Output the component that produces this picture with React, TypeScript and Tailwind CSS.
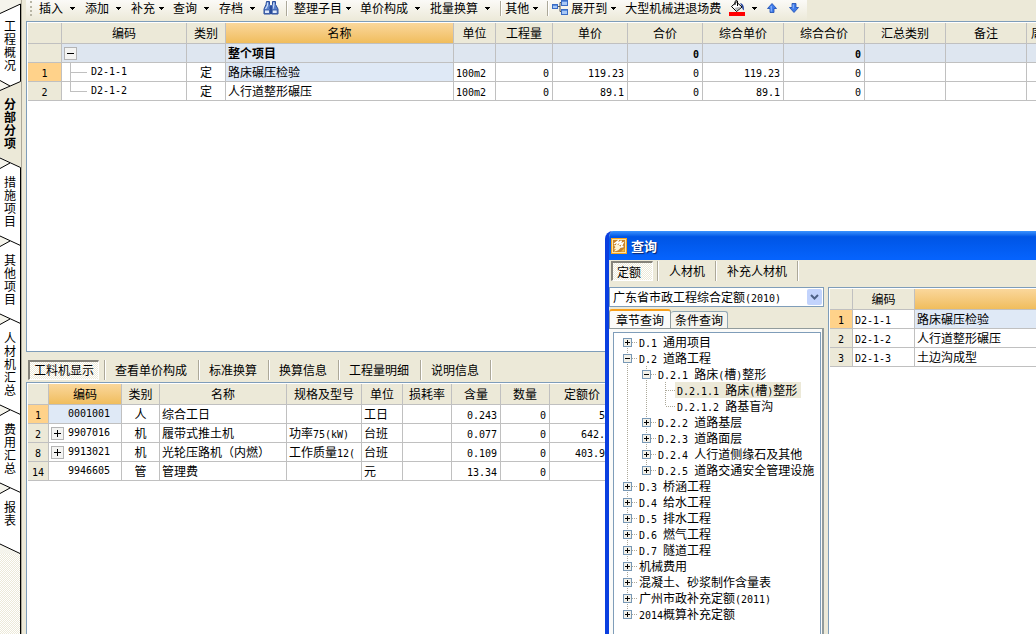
import React, { useState } from "react";

/* Latin runs are set in a monospace face that is half a CJK character wide. */
function T({ children }: { children: string }) {
  const parts = children.split(/([\x20-\x7e]+)/).filter(Boolean);
  return (
    <>
      {parts.map((p, i) =>
        /^[\x20-\x7e]+$/.test(p) ? (
          <span key={i} className="whitespace-pre font-['DejaVu_Sans_Mono',monospace] text-[10px] leading-none">
            {p}
          </span>
        ) : (
          <React.Fragment key={i}>{p}</React.Fragment>
        )
      )}
    </>
  );
}

/* ---------- left vertical tabs ---------- */

const SIDE_TABS = ["工程概况", "分部分项", "措施项目", "其他项目", "人材机汇总", "费用汇总", "报表"];
const DITHER = "bg-[repeating-conic-gradient(#ece9d8_0_25%,#fff_0_50%)] bg-size-[2px_2px]";

function Notch({ kind }: { kind: "top" | "plain" | "beforeActive" | "afterActive" | "last" }) {
  const face = "#ece9d8";
  const dither = "#f5f4ec";
  if (kind === "top")
    return (
      <svg className="block h-[19px] w-[22px] shrink-0" viewBox="0 0 22 19">
        <rect width="22" height="19" fill={face} />
        <path d="M0 0H20V4L0 14Z" fill={dither} />
        <path d="M0 13.5L20 4V19H0Z" fill="#fff" />
        <path d="M0 13.5L20.5 4V19" fill="none" stroke="#000" />
        <path d="M21.5 0V19" stroke="#aca899" />
      </svg>
    );
  if (kind === "last")
    return (
      <svg className="block h-[28px] w-[22px] shrink-0" viewBox="0 0 22 28">
        <rect width="22" height="28" fill={dither} />
        <path d="M0 0H20V27L0 18Z" fill="#fff" />
        <path d="M0 18L20 27.5" stroke="#000" />
        <path d="M20.5 0V28" stroke="#000" />
        <path d="M21.5 0V28" stroke="#aca899" />
      </svg>
    );
  const before = kind === "beforeActive";
  const after = kind === "afterActive";
  return (
    <svg className="block h-[26px] w-[22px] shrink-0" viewBox="0 0 22 26">
      <rect width="22" height="26" fill={after || before ? face : "#fff"} />
      {before && <path d="M0 0H20V10.5L0 20Z" fill="#fff" />}
      {after && <path d="M0 8L20 18V26H0Z" fill="#fff" />}
      <path d="M0 9L10 14L0 19.5Z" fill={dither} />
      {before ? (
        <path d="M0 19.5L20.5 10.5V0M0 9.5L10 15" fill="none" stroke="#000" />
      ) : (
        <path d="M0 9L20.5 18.5V26M0 19.5L10 14" fill="none" stroke="#000" />
      )}
      {kind === "plain" && <path d="M20.5 0V26" stroke="#000" />}
      <path d="M21.5 0V26" stroke="#aca899" />
    </svg>
  );
}

function SideTabs() {
  const active = 1;
  return (
    <nav className="flex w-[22px] shrink-0 flex-col">
      <Notch kind="top" />
      {SIDE_TABS.map((t, i) => (
        <React.Fragment key={t}>
          <button
            type="button"
            className={
              "block w-[22px] shrink-0 border-r border-[#aca899] pl-1 text-left " +
              (i === active ? "bg-[#ece9d8] font-bold" : "bg-white")
            }
          >
            <span
              className={
                "block border-r pr-1 leading-[13px] " + (i === active ? "border-transparent" : "border-black")
              }
            >
              <span className="block w-3 break-all">{t}</span>
            </span>
          </button>
          <Notch
            kind={
              i === SIDE_TABS.length - 1
                ? "last"
                : i + 1 === active
                  ? "beforeActive"
                  : i === active
                    ? "afterActive"
                    : "plain"
            }
          />
        </React.Fragment>
      ))}
      <div className={"flex-1 border-r border-[#aca899] " + DITHER}>
        <div className="h-full border-r border-black" />
      </div>
    </nav>
  );
}

/* ---------- toolbar ---------- */

function Caret() {
  return (
    <svg className="h-[3px] w-[5px] shrink-0" viewBox="0 0 5 3" shapeRendering="crispEdges">
      <path d="M0 0H5V1H4V2H3V3H2V2H1V1H0Z" fill="#000" />
    </svg>
  );
}

function Drop({ children, wide }: { children: string; wide?: boolean }) {
  return (
    <button
      type="button"
      className={"flex shrink-0 items-center whitespace-nowrap " + (wide ? "mr-[10px] gap-[7px]" : "mr-[9px] gap-1")}
    >
      {children}
      <Caret />
    </button>
  );
}

function Sep({ tall }: { tall?: boolean }) {
  return (
    <span
      className={"w-[2px] shrink-0 border-l border-r border-l-[#aca899] border-r-white " + (tall ? "h-5" : "h-[15px]")}
    />
  );
}

function Binoculars() {
  return (
    <svg className="h-4 w-4 shrink-0" viewBox="0 0 16 16">
      <path d="M3.5 1.5h3v3l1 1v8.5h-6.5V9l2-4.5zM9.5 1.5h3v3L15 9v5h-6.5V5.5l1-1z" fill="#5b82cc" stroke="#2a4c9a" />
      <path d="M4.5 2.5v3L2.5 9M10.8 2.5v3L9.8 9" stroke="#c9dcfa" strokeWidth="1.2" fill="none" />
      <path d="M1.5 10h5v3.5h-5zM9.2 10h5v3.5h-5z" fill="#dfe9fb" stroke="#2a4c9a" strokeWidth=".8" />
      <path d="M6.5 6.5h3v2.5h-3z" fill="#2a4c9a" />
    </svg>
  );
}

function ExpandIcon() {
  return (
    <svg className="h-4 w-4 shrink-0" viewBox="0 0 16 16">
      <path d="M5 6.5h3M10 2.5H8V11.5H10" fill="none" stroke="#555" />
      <rect x=".5" y="4.5" width="5" height="4" fill="#a9c8f5" stroke="#3a6cc4" />
      <rect x="9.5" y=".5" width="6" height="5" fill="#a9c8f5" stroke="#3a6cc4" />
      <rect x="9.5" y="9.5" width="6" height="5" fill="#a9c8f5" stroke="#3a6cc4" />
      <path d="M1 5.5h4M10 1.5h5M10 10.5h5" stroke="#5d8fe0" />
    </svg>
  );
}

function Bucket() {
  return (
    <svg className="h-4 w-4 shrink-0" viewBox="0 0 16 16">
      <path d="M2.5 6.5L7.5 2L13 7L7.5 11.5Z" fill="#fff" stroke="#000" />
      <path d="M5.5 8L12 6.5L7.5 11Z" fill="#b8b8b8" />
      <path d="M6 5V1.5Q7 -.2 8.5 1V6" fill="none" stroke="#000" />
      <path d="M11 3Q15.4 3.5 15 10.5Q12.8 9 13 6.5Z" fill="#1f3f9a" />
      <rect y="12" width="16" height="4" fill="#f00" />
    </svg>
  );
}

function Arrow({ down }: { down?: boolean }) {
  return (
    <svg className="h-[10px] w-[10px] shrink-0" viewBox="0 0 10 10">
      <path
        d={down ? "M3 .5h4v4h2.5L5 9.5L.5 4.5H3Z" : "M3 9.5h4v-4h2.5L5 .5L.5 5.5H3Z"}
        fill="#3f7bea"
        stroke="#1c4bb0"
        strokeWidth=".8"
      />
      <path d={down ? "M4.2 1.5v4" : "M4.2 3v5.5"} stroke="#9cc3ff" />
    </svg>
  );
}

function Toolbar() {
  return (
    <div className="flex h-[21px] shrink-0">
      <div className="flex shrink-0 items-center bg-linear-to-b from-[#fbfaf7] to-[#ece9d8] pb-[5px] pl-1 pr-2">
        <span className="mr-[7px] h-[15px] w-[2px] border-l-2 border-dotted border-[#b8b5a5]" />
        <Drop wide>插入</Drop>
        <Drop wide>添加</Drop>
        <Drop>补充</Drop>
        <Drop wide>查询</Drop>
        <Drop wide>存档</Drop>
        <button type="button" className="-ml-[2px] mr-[7px]">
          <Binoculars />
        </button>
        <Sep />
        <span className="w-[6px]" />
        <Drop>整理子目</Drop>
        <Drop wide>单价构成</Drop>
        <Drop wide>批量换算</Drop>
        <Sep />
        <span className="w-[3px]" />
        <Drop>其他</Drop>
        <Sep />
        <button type="button" className="mx-[3px]">
          <ExpandIcon />
        </button>
        <Drop>展开到</Drop>
        <button type="button" className="mr-2 whitespace-nowrap">
          大型机械进退场费
        </button>
        <button type="button" className="mr-[10px] flex items-center gap-[7px]">
          <Bucket />
          <Caret />
        </button>
        <button type="button" className="mr-3">
          <Arrow />
        </button>
        <button type="button">
          <Arrow down />
        </button>
      </div>
    </div>
  );
}

/* ---------- grids ---------- */

const TH = "h-[21px] overflow-hidden whitespace-nowrap border-b border-r border-[#c0c0c0] p-0 font-normal";
const TD = "h-[19px] overflow-hidden whitespace-nowrap border-b border-r border-[#c0c0c0] p-0 leading-[18px]";
const FACE = " bg-[#ece9d8]";
const GOLD = " bg-linear-to-b from-[#fad79b] to-[#f0bd5c]";
const CUR = " bg-[#ffd28a]";
const BLUE = " bg-[#dfe9f6]";
const SUM = " bg-[#dee6f0]";

function PlusBox({ minus }: { minus?: boolean }) {
  return (
    <svg className="h-[13px] w-[13px] shrink-0" viewBox="0 0 13 13" shapeRendering="crispEdges">
      <rect x=".5" y=".5" width="12" height="12" fill="#f4f4f2" stroke="#b4b4b4" />
      <path d={minus ? "M3 6.5H10" : "M3 6.5H10M6.5 3V10"} stroke="#000" />
    </svg>
  );
}

function Branch({ last }: { last?: boolean }) {
  return (
    <svg className="h-[18px] w-[29px] shrink-0" viewBox="0 0 29 18" shapeRendering="crispEdges">
      <path d={last ? "M8.5 0V9.5H25" : "M8.5 0V18M8.5 9.5H25"} fill="none" stroke="#c0c0c0" />
    </svg>
  );
}

const MAIN_COLS = [
  "w-[34px]",
  "w-[125px]",
  "w-[39px]",
  "w-[228px]",
  "w-[42px]",
  "w-[57px]",
  "w-[75px]",
  "w-[75px]",
  "w-[81px]",
  "w-[81px]",
  "w-[81px]",
  "w-[81px]",
  "w-[81px]",
];
const MAIN_HEAD = ["", "编码", "类别", "名称", "单位", "工程量", "单价", "合价", "综合单价", "综合合价", "汇总类别", "备注"];
const MAIN_ROWS = [
  { n: "1", code: "D2-1-1", name: "路床碾压检验", price: "119.23", cur: true },
  { n: "2", code: "D2-1-2", name: "人行道整形碾压", price: "89.1", cur: false },
];

function MainGrid() {
  return (
    <section className="min-h-0 flex-[331] overflow-hidden border border-r-0 border-[#7f9db9] bg-white pl-px pt-px">
      <table className="w-[1080px] min-w-full table-fixed border-separate border-spacing-0">
        <colgroup>
          {MAIN_COLS.map((w, i) => (
            <col key={i} className={w} />
          ))}
        </colgroup>
        <thead>
          <tr>
            {MAIN_HEAD.map((h, i) => (
              <th key={i} className={TH + (i === 3 ? GOLD : FACE)}>
                {h}
              </th>
            ))}
            <th className={TH + FACE + " pl-1 text-left"}>周</th>
          </tr>
        </thead>
        <tbody>
          <tr className="font-bold">
            <td className={TD + FACE} />
            <td className={TD + SUM + " pl-[2px]"}>
              <button type="button" className="flex h-[18px] items-center">
                <PlusBox minus />
              </button>
            </td>
            <td className={TD + SUM} />
            <td className={TD + SUM + " pl-[2px]"}>整个项目</td>
            {["", "", "", "0", "", "0", "", "", ""].map((v, i) => (
              <td key={i} className={TD + SUM + " pr-[3px] text-right"}>
                <T>{v}</T>
              </td>
            ))}
          </tr>
          {MAIN_ROWS.map((r) => (
            <tr key={r.n}>
              <td className={TD + " text-center" + (r.cur ? CUR : FACE)}>
                <T>{r.n}</T>
              </td>
              <td className={TD}>
                <div className="flex h-[18px] items-center">
                  <Branch last={!r.cur} />
                  <T>{r.code}</T>
                </div>
              </td>
              <td className={TD + " text-center"}>定</td>
              <td className={TD + " pl-[2px]" + (r.cur ? BLUE : "")}>{r.name}</td>
              <td className={TD + " pl-[2px]"}>
                <T>100m2</T>
              </td>
              {["0", r.price, "0", r.price, "0", "", "", ""].map((v, i) => (
                <td key={i} className={TD + " pr-[3px] text-right"}>
                  <T>{v}</T>
                </td>
              ))}
            </tr>
          ))}
        </tbody>
      </table>
    </section>
  );
}

const DETAIL_TABS = ["查看单价构成", "标准换算", "换算信息", "工程量明细", "说明信息"];
const DETAIL_COLS = [
  "w-[21px]",
  "w-[73px]",
  "w-[38px]",
  "w-[127px]",
  "w-[75px]",
  "w-[41px]",
  "w-[49px]",
  "w-[49px]",
  "w-[49px]",
  "w-[65px]",
];
const DETAIL_HEAD = ["", "编码", "类别", "名称", "规格及型号", "单位", "损耗率", "含量", "数量", "定额价"];
const DETAIL_ROWS = [
  { n: "1", plus: false, code: "0001001", kind: "人", name: "综合工日", spec: "", unit: "工日", amt: "0.243", price: "51" },
  { n: "2", plus: true, code: "9907016", kind: "机", name: "履带式推土机", spec: "功率75(kW)", unit: "台班", amt: "0.077", price: "642.9" },
  { n: "8", plus: true, code: "9913021", kind: "机", name: "光轮压路机（内燃）", spec: "工作质量12(", unit: "台班", amt: "0.109", price: "403.95" },
  { n: "14", plus: false, code: "9946605", kind: "管", name: "管理费", spec: "", unit: "元", amt: "13.34", price: "" },
];

function Pressed({ children }: { children: string }) {
  return (
    <button
      type="button"
      className={
        "h-5 min-w-[42px] shrink-0 whitespace-nowrap border-2 border-b border-r border-[#85837a] border-b-white border-r-white px-1 text-left leading-4 " +
        DITHER
      }
    >
      {children}
    </button>
  );
}

function DetailPanel() {
  return (
    <>
      <div className="flex h-[30px] shrink-0 items-center overflow-hidden pl-[2px] pt-[5px]">
        <Pressed>工料机显示</Pressed>
        <span className="w-[5px] shrink-0" />
        {DETAIL_TABS.map((t) => (
          <React.Fragment key={t}>
            <Sep tall />
            <button type="button" className="shrink-0 whitespace-nowrap pl-[9px] pr-[11px]">
              {t}
            </button>
          </React.Fragment>
        ))}
        <Sep tall />
      </div>
      <section className="min-h-0 flex-[252] overflow-hidden border border-b-0 border-r-0 border-[#7f9db9] bg-white pl-px pt-px">
        <table className="w-[587px] table-fixed border-separate border-spacing-0">
          <colgroup>
            {DETAIL_COLS.map((w, i) => (
              <col key={i} className={w} />
            ))}
          </colgroup>
          <thead>
            <tr>
              {DETAIL_HEAD.map((h, i) => (
                <th key={i} className={TH + (i === 1 ? GOLD : FACE)}>
                  {h}
                </th>
              ))}
            </tr>
          </thead>
          <tbody>
            {DETAIL_ROWS.map((r, i) => (
              <tr key={r.n}>
                <td className={TD + " text-center" + (i === 0 ? CUR : FACE)}>
                  <T>{r.n}</T>
                </td>
                <td className={TD + (i === 0 ? BLUE : "")}>
                  <div className="flex h-[18px] items-center gap-1 pl-[2px]">
                    {r.plus ? (
                      <button type="button" className="flex">
                        <PlusBox />
                      </button>
                    ) : (
                      <span className="w-[13px]" />
                    )}
                    <T>{r.code}</T>
                  </div>
                </td>
                <td className={TD + " text-center"}>{r.kind}</td>
                <td className={TD + " pl-[2px]"}>{r.name}</td>
                <td className={TD + " pl-[2px]"}>
                  <T>{r.spec}</T>
                </td>
                <td className={TD + " pl-[2px]"}>{r.unit}</td>
                <td className={TD} />
                {[r.amt, "0", r.price].map((v, k) => (
                  <td key={k} className={TD + " pr-[3px] text-right"}>
                    <T>{v}</T>
                  </td>
                ))}
              </tr>
            ))}
          </tbody>
        </table>
      </section>
    </>
  );
}

/* ---------- query dialog ---------- */

type Node = { t: string; level: number; box?: "+" | "-"; last?: boolean; sel?: boolean };
const TREE: Node[] = [
  { t: "D.1 通用项目", level: 0, box: "+" },
  { t: "D.2 道路工程", level: 0, box: "-" },
  { t: "D.2.1 路床(槽)整形", level: 1, box: "-" },
  { t: "D.2.1.1 路床(槽)整形", level: 2, sel: true },
  { t: "D.2.1.2 路基盲沟", level: 2, last: true },
  { t: "D.2.2 道路基层", level: 1, box: "+" },
  { t: "D.2.3 道路面层", level: 1, box: "+" },
  { t: "D.2.4 人行道侧缘石及其他", level: 1, box: "+" },
  { t: "D.2.5 道路交通安全管理设施", level: 1, box: "+", last: true },
  { t: "D.3 桥涵工程", level: 0, box: "+" },
  { t: "D.4 给水工程", level: 0, box: "+" },
  { t: "D.5 排水工程", level: 0, box: "+" },
  { t: "D.6 燃气工程", level: 0, box: "+" },
  { t: "D.7 隧道工程", level: 0, box: "+" },
  { t: "机械费用", level: 0, box: "+" },
  { t: "混凝土、砂浆制作含量表", level: 0, box: "+" },
  { t: "广州市政补充定额(2011)", level: 0, box: "+" },
  { t: "2014概算补充定额", level: 0, box: "+", last: true },
];

function Guide({ node, first, own }: { node: Node; first: boolean; own: boolean }) {
  const d = !own ? "M9.5 0V16" : `M9.5 ${first ? 8 : 0}V${node.last ? 8 : 16}M10 8.5H19`;
  return (
    <svg className="h-4 w-[19px] shrink-0" viewBox="0 0 19 16" shapeRendering="crispEdges">
      <path d={d} fill="none" stroke="#aca899" strokeDasharray="1 1" />
      {own && node.box && (
        <>
          <rect x="5.5" y="4.5" width="8" height="8" fill="#f3f1e9" stroke="#7898b5" />
          <path d={node.box === "+" ? "M7 8.5H12M9.5 6V11" : "M7 8.5H12"} stroke="#000" />
        </>
      )}
    </svg>
  );
}

function Tree() {
  return (
    <ul className="min-h-0 flex-1 overflow-hidden border border-b-0 border-[#7f9db9] bg-white pl-1 pt-px">
      {TREE.map((n, i) => (
        <li key={n.t} className="flex h-4 items-center whitespace-nowrap leading-4">
          {Array.from({ length: n.level + 1 }, (_, k) => (
            <Guide key={k} node={n} first={i === 0} own={k === n.level} />
          ))}
          <span className={"h-4 pl-[2px] pr-1 " + (n.sel ? "bg-[#ece9d8]" : "")}>
            <T>{n.t}</T>
          </span>
        </li>
      ))}
    </ul>
  );
}

const RESULT_ROWS = [
  { n: "1", code: "D2-1-1", name: "路床碾压检验" },
  { n: "2", code: "D2-1-2", name: "人行道整形碾压" },
  { n: "3", code: "D2-1-3", name: "土边沟成型" },
];

function DialogIcon() {
  return (
    <svg className="h-4 w-4 shrink-0" viewBox="0 0 16 16">
      <rect width="16" height="16" fill="#f9a51f" />
      <rect x="1.5" y="1.5" width="13" height="13" fill="#c9832a" stroke="#ffe3a0" />
      <path d="M3 6L7 3L6 6L10.5 2.8L8.5 6.5L12 5L10 9L12.5 8.5" fill="none" stroke="#fff" strokeWidth="1.4" />
      <path d="M2.5 7.5L7 6.5L10 9Q8 13 3 13.5L5 11L2.5 11.5L4.5 9Z" fill="#fff4d6" />
      <path d="M11 12.5L13.5 10V13.5H10Z" fill="#f7b93c" />
    </svg>
  );
}

function QueryDialog() {
  const [lib, setLib] = useState("a");
  return (
    <div
      role="dialog"
      className="absolute bottom-0 left-[605px] right-0 top-[231px] flex flex-col overflow-hidden rounded-tl-lg border-l-4 border-[#0a3fe0] bg-[#ece9d8]"
    >
      <header className="flex h-[29px] shrink-0 items-center gap-1 bg-linear-to-b from-[#3a93ff] from-0% via-[#0055e5] via-20% to-[#0563fd] to-95% pl-[2px] text-white">
        <DialogIcon />
        <h2 className="text-[13px] font-bold [text-shadow:1px_1px_1px_#0a246a]">查询</h2>
      </header>
      <div className="flex h-[27px] shrink-0 items-start pl-[2px]">
        <div className="flex items-center pt-px">
          <Pressed>定额</Pressed>
          <span className="w-1" />
          <Sep tall />
          <button type="button" className="px-[10px]">
            人材机
          </button>
          <Sep tall />
          <button type="button" className="px-[10px]">
            补充人材机
          </button>
          <Sep tall />
        </div>
      </div>
      <div className="flex min-h-0 flex-1">
        <div className="flex w-[215px] shrink-0 flex-col">
          <div className="flex h-5 shrink-0 items-center border border-[#7f9db9] bg-white">
            <div className="relative flex h-full flex-1 items-center pl-[3px]">
              <span className="whitespace-nowrap" id="lib-text">
                <T>广东省市政工程综合定额(2010)</T>
              </span>
              <select
                aria-labelledby="lib-text"
                value={lib}
                onChange={(e) => setLib(e.target.value)}
                className="absolute inset-0 w-full appearance-none opacity-0"
              >
                <option value="a">广东省市政工程综合定额(2010)</option>
              </select>
            </div>
            <svg className="mr-px h-4 w-[15px] shrink-0" viewBox="0 0 15 16">
              <rect width="15" height="16" rx="2" fill="#c2d3fc" />
              <path d="M4 6L7.5 9.5L11 6" fill="none" stroke="#4d6185" strokeWidth="2" />
            </svg>
          </div>
          <div className="flex h-[21px] shrink-0 items-end pt-[2px]">
            <button
              type="button"
              className="-mb-px h-5 whitespace-nowrap rounded-t-[3px] border border-b-0 border-t-2 border-[#919b9c] border-t-[#f8a01c] bg-[#fbfbf9] px-[6px] leading-4"
            >
              章节查询
            </button>
            <button
              type="button"
              className="h-[17px] whitespace-nowrap rounded-t-[3px] border border-b-0 border-l-0 border-[#91a7b4] bg-[#f5f4ee] px-1 leading-4"
            >
              条件查询
            </button>
          </div>
          <div className="flex min-h-0 flex-1 flex-col border-r-2 border-t border-[#919b9c] bg-[#fbfbf9] pl-1 pr-px pt-[3px]">
            <Tree />
          </div>
        </div>
        <section className="ml-1 min-w-0 flex-1 overflow-hidden border-l border-t border-[#7f9db9] bg-white pl-px pt-px">
          <table className="w-full table-fixed border-separate border-spacing-0">
            <colgroup>
              <col className="w-[23px]" />
              <col className="w-[62px]" />
              <col />
            </colgroup>
            <thead>
              <tr>
                <th className={TH + FACE} />
                <th className={TH + FACE}>编码</th>
                <th className={TH + GOLD + " border-r-0"} />
              </tr>
            </thead>
            <tbody>
              {RESULT_ROWS.map((r, i) => (
                <tr key={r.n}>
                  <td className={TD + " text-center" + (i === 0 ? CUR : FACE)}>
                    <T>{r.n}</T>
                  </td>
                  <td className={TD + " pl-[2px]"}>
                    <T>{r.code}</T>
                  </td>
                  <td className={TD + " border-r-0 pl-[2px]" + (i === 0 ? BLUE : "")}>{r.name}</td>
                </tr>
              ))}
            </tbody>
          </table>
        </section>
      </div>
    </div>
  );
}

export default function App() {
  return (
    <div className="relative flex h-screen overflow-hidden bg-[#ece9d8] font-['Noto_Sans_CJK_SC',sans-serif] text-[12px] leading-4 text-black">
      <SideTabs />
      <main className="ml-1 flex min-w-0 flex-1 flex-col">
        <Toolbar />
        <MainGrid />
        <DetailPanel />
      </main>
      <QueryDialog />
    </div>
  );
}
